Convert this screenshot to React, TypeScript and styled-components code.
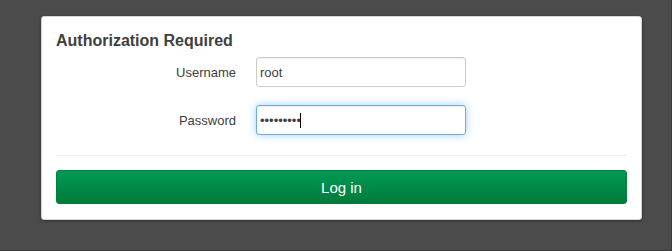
import React from 'react';
import styled, { createGlobalStyle } from 'styled-components';

const GlobalStyle = createGlobalStyle`
  html, body {
    margin: 0;
    padding: 0;
    background: #4b4b4b;
  }
  body {
    font-family: "Liberation Sans", Arial, sans-serif;
  }
`;

const Page = styled.div`
  width: 672px;
  height: 251px;
  box-sizing: border-box;
  padding: 16px 0 0 41px;
  background: #4b4b4b;
  border-right: 1px solid #3a3a3a;
  border-bottom: 1px solid #3a3a3a;
`;

const Card = styled.form`
  width: 601px;
  box-sizing: border-box;
  background: #fff;
  border: 1px solid #d4d4d4;
  border-radius: 3px;
  box-shadow: 0 1px 3px rgba(0, 0, 0, 0.4);
  padding: 14px 14px 15px 14px;
`;

const Title = styled.h3`
  margin: 0 0 6px;
  font-size: 16px;
  line-height: 20px;
  font-weight: bold;
  color: #404040;
`;

const Fields = styled.div`
  display: grid;
  grid-template-columns: 180px 210px;
  column-gap: 20px;
  row-gap: 18px;
  align-items: center;
`;

const Label = styled.label`
  text-align: right;
  font-size: 13px;
  color: #404040;
`;

const FieldWrap = styled.div`
  position: relative;
  height: 30px;
`;

const Input = styled.input<{ $focused?: boolean }>`
  display: block;
  width: 210px;
  height: 30px;
  box-sizing: border-box;
  margin: 0;
  padding: 0 3px;
  font-family: "Liberation Sans", Arial, sans-serif;
  font-size: 13px;
  color: #404040;
  background: #fff;
  border: 1px solid ${({ $focused }) => ($focused ? '#66afe9' : '#cccccc')};
  border-radius: 3px;
  outline: none;
  caret-color: transparent;
  box-shadow: ${({ $focused }) =>
    $focused
      ? 'inset 0 1px 1px rgba(0,0,0,.075), 0 0 8px rgba(102,175,233,.6)'
      : 'inset 0 1px 1px rgba(0,0,0,.075)'};
`;

const Caret = styled.span<{ $left: number }>`
  position: absolute;
  top: 8px;
  left: ${({ $left }) => $left}px;
  width: 1px;
  height: 15px;
  background: #000;
`;

const Divider = styled.hr`
  margin: 20px 0 14px;
  border: 0;
  border-top: 1px solid #eeeeee;
  height: 0;
`;

const LoginButton = styled.button`
  display: block;
  width: 100%;
  height: 34px;
  margin: 0;
  padding: 0;
  border: 1px solid #00803f;
  border-radius: 3px;
  background: linear-gradient(to bottom, #009a55, #007a3b);
  color: #fff;
  font-family: "Liberation Sans", Arial, sans-serif;
  font-size: 15px;
  cursor: pointer;
`;

const App: React.FC = () => {
  return (
    <>
      <GlobalStyle />
      <Page>
        <Card onSubmit={(e) => e.preventDefault()}>
          <Title>Authorization Required</Title>
          <Fields>
            <Label htmlFor="username">Username</Label>
            <FieldWrap>
              <Input id="username" type="text" defaultValue="root" readOnly />
            </FieldWrap>
            <Label htmlFor="password">Password</Label>
            <FieldWrap>
              <Input id="password" type="password" defaultValue="123456789" readOnly $focused />
              <Caret $left={44} />
            </FieldWrap>
          </Fields>
          <Divider />
          <LoginButton type="submit">Log in</LoginButton>
        </Card>
      </Page>
    </>
  );
};

export default App;
